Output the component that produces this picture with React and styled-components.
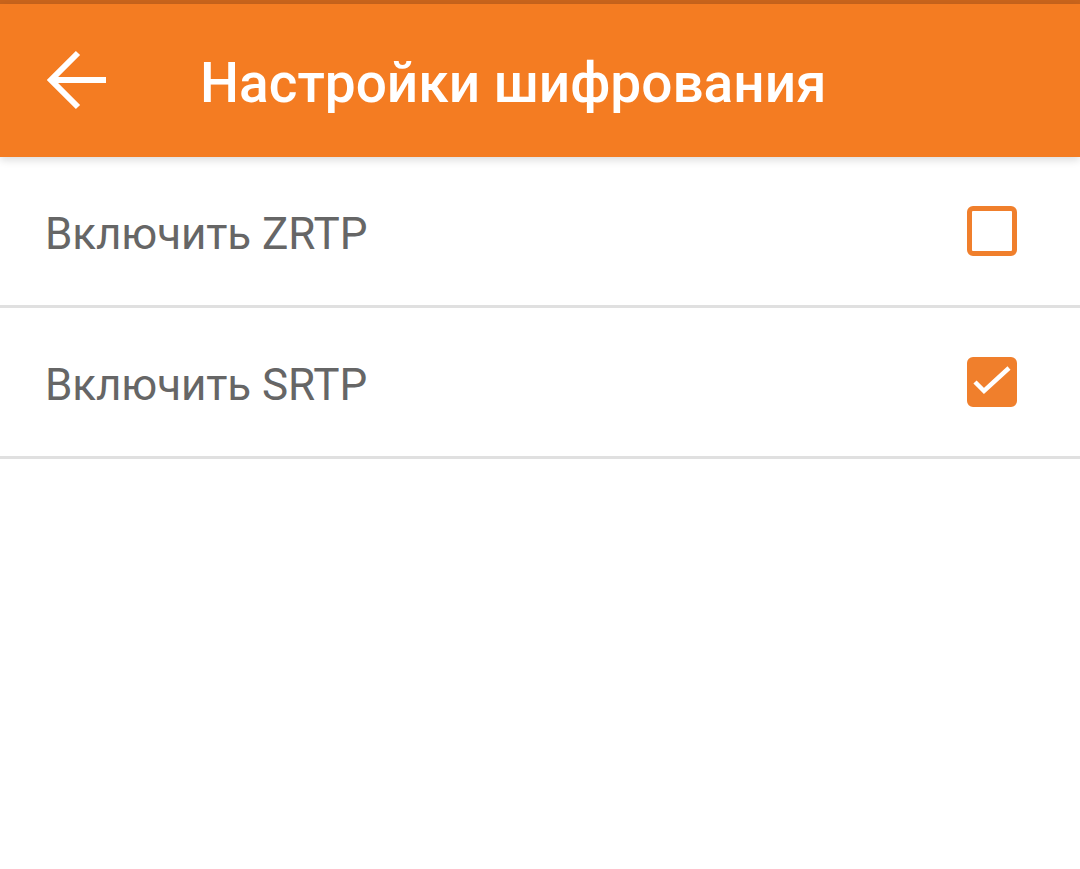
import React, { useState } from "react";
import styled, { createGlobalStyle } from "styled-components";

const Global = createGlobalStyle`
  html, body { margin: 0; padding: 0; background: #ffffff; }
  body { font-family: Roboto, "Noto Sans", sans-serif; }
`;

const Page = styled.div`
  width: 1080px;
  height: 869px;
  background: #ffffff;
  display: flex;
  flex-direction: column;
  overflow: hidden;
`;

const StatusStrip = styled.div`
  height: 4px;
  background: #c9641c;
`;

const Toolbar = styled.header`
  height: 153px;
  background: #f47c22;
  display: flex;
  align-items: center;
  box-shadow: 0 3px 8px rgba(0, 0, 0, 0.14);
  position: relative;
  z-index: 1;
`;

const BackButton = styled.button`
  width: 60px;
  height: 60px;
  margin-left: 47px;
  padding: 0;
  border: none;
  background: transparent;
  display: flex;
  align-items: center;
  justify-content: center;
  margin-top: -1px;
`;

const Title = styled.h1`
  margin: 6px 0 0 93px;
  color: #ffffff;
  font-family: Roboto, sans-serif;
  font-weight: 500;
  font-size: 55px;
  letter-spacing: 0;
  line-height: 1;
`;

const List = styled.div`
  display: flex;
  flex-direction: column;
`;

const Row = styled.label`
  height: 148px;
  display: flex;
  align-items: center;
  justify-content: space-between;
  padding: 0 63px 0 45px;
  border-bottom: 3px solid #e0e0e0;
  cursor: pointer;
`;

const RowText = styled.span`
  font-family: Roboto, sans-serif;
  font-size: 44px;
  letter-spacing: -0.1px;
  color: #666666;
  margin-top: 6px;
`;

const Box = styled.span`
  width: 50px;
  height: 50px;
  box-sizing: border-box;
  border-radius: 6px;
  border: 5px solid #f07f2c;
  background: ${(p) => (p.$checked ? "#f07f2c" : "#ffffff")};
  display: flex;
  align-items: center;
  justify-content: center;
  position: relative;
`;

const CheckMark = styled.svg`
  position: absolute;
  left: -5px;
  top: -5px;
`;

const Check = ({ checked, onToggle }) => (
  <Box $checked={checked} onClick={onToggle}>
    {checked && (
      <CheckMark width="50" height="50" viewBox="0 0 50 50">
        <path d="M8 25 L17 34 L42 11" fill="none" stroke="#ffffff" strokeWidth="4.5" />
      </CheckMark>
    )}
  </Box>
);

export default function App() {
  const [items, setItems] = useState([
    { label: "Включить ZRTP", checked: false },
    { label: "Включить SRTP", checked: true },
  ]);
  const toggle = (i) =>
    setItems((arr) => arr.map((it, j) => (j === i ? { ...it, checked: !it.checked } : it)));
  return (
    <Page>
      <Global />
      <StatusStrip />
      <Toolbar>
        <BackButton aria-label="Назад">
          <svg width="60" height="60" viewBox="0 0 60 60">
            <path d="M59 30 H4 M31 3 L4 30 L31 57" fill="none" stroke="#ffffff" strokeWidth="6" />
          </svg>
        </BackButton>
        <Title>Настройки шифрования</Title>
      </Toolbar>
      <List>
        {items.map((it, i) => (
          <Row key={it.label}>
            <RowText>{it.label}</RowText>
            <Check checked={it.checked} onToggle={() => toggle(i)} />
          </Row>
        ))}
      </List>
    </Page>
  );
}
